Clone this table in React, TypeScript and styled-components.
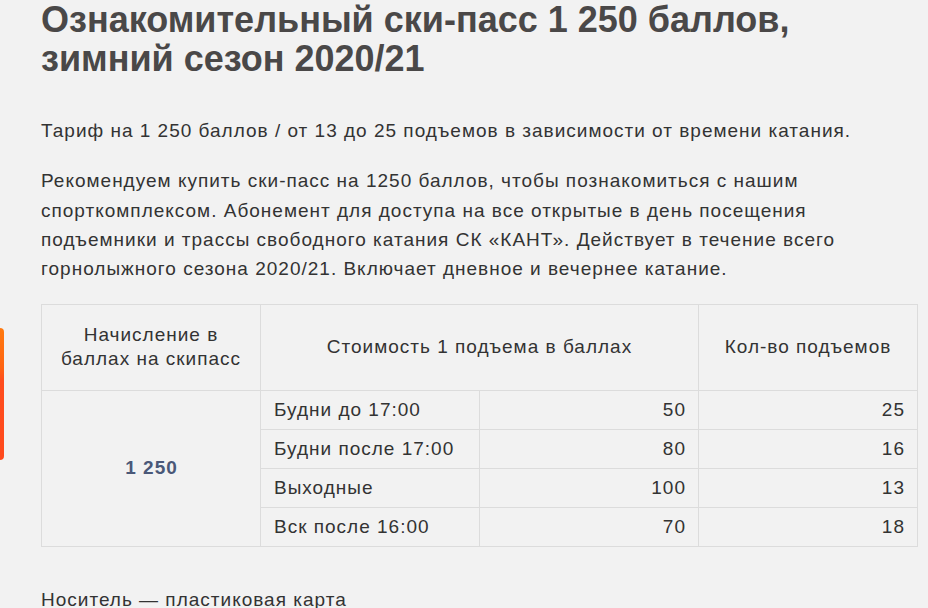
import React from "react";
import styled, { createGlobalStyle } from "styled-components";

const Global = createGlobalStyle`
  html, body { margin: 0; padding: 0; background: #f2f2f2; }
  body { font-family: "Liberation Sans", Arial, sans-serif; color: #333; overflow: hidden; }
`;

const Page = styled.main`
  width: 877px;
  padding: 0 0 0 41px;
`;

const Title = styled.h1`
  margin: 0;
  font-size: 36px;
  line-height: 39px;
  font-weight: 700;
  color: #4a4848;
`;

const Text = styled.p<{ $top?: number }>`
  margin: ${(p) => p.$top ?? 21}px 0 0;
  font-size: 19px;
  letter-spacing: 1px;
  line-height: 29.3px;
  color: #333;
  white-space: nowrap;
`;

const Table = styled.table`
  margin-top: 20.5px;
  width: 877px;
  border-collapse: collapse;
  table-layout: fixed;
  font-size: 19px;
  letter-spacing: 1px;
  color: #333;
`;

const Th = styled.th`
  height: 85px;
  padding: 0 12px;
  border: 1px solid #dcdcdc;
  font-weight: 400;
  line-height: 24px;
  text-align: center;
  vertical-align: middle;
  color: #333;
`;

const Td = styled.td<{ $align?: "left" | "right" | "center" }>`
  height: 38px;
  padding: 0 12px 0 13px;
  border: 1px solid #dcdcdc;
  line-height: 22px;
  text-align: ${(p) => p.$align ?? "left"};
  vertical-align: middle;
  white-space: nowrap;
`;

const Points = styled(Td)`
  font-weight: 700;
  color: #4a5878;
`;

const Tab = styled.div`
  position: fixed;
  left: 0;
  top: 328px;
  width: 4px;
  height: 132px;
  border-radius: 0 5px 5px 0;
  background: linear-gradient(180deg, #ff7a10 0%, #ff6412 30%, #ff4d1e 40%, #ff4a1d 100%);
`;

const rows = [
  { name: "Будни до 17:00", cost: 50, count: 25 },
  { name: "Будни после 17:00", cost: 80, count: 16 },
  { name: "Выходные", cost: 100, count: 13 },
  { name: "Вск после 16:00", cost: 70, count: 18 },
];

export default function App() {
  return (
    <>
      <Global />
      <Tab />
      <Page>
        <Title>
          Ознакомительный ски-пасс 1 250 баллов,
          <br />
          зимний сезон 2020/21
        </Title>
        <Text $top={38}>
          Тариф на 1 250 баллов / от 13 до 25 подъемов в зависимости от времени катания.
        </Text>
        <Text>
          Рекомендуем купить ски-пасс на 1250 баллов, чтобы познакомиться с нашим
          <br />
          спорткомплексом. Абонемент для доступа на все открытые в день посещения
          <br />
          подъемники и трассы свободного катания СК «КАНТ». Действует в течение всего
          <br />
          горнолыжного сезона 2020/21. Включает дневное и вечернее катание.
        </Text>
        <Table>
          <thead>
            <tr>
              <Th>
                Начисление в<br />
                баллах на скипасс
              </Th>
              <Th colSpan={2}>Стоимость 1 подъема в баллах</Th>
              <Th>Кол-во подъемов</Th>
            </tr>
          </thead>
          <tbody>
            {rows.map((r, i) => (
              <tr key={r.name}>
                {i === 0 && (
                  <Points rowSpan={rows.length} $align="center">
                    1 250
                  </Points>
                )}
                <Td>{r.name}</Td>
                <Td $align="right">{r.cost}</Td>
                <Td $align="right">{r.count}</Td>
              </tr>
            ))}
          </tbody>
        </Table>
        <Text $top={38}>Носитель — пластиковая карта</Text>
      </Page>
    </>
  );
}
